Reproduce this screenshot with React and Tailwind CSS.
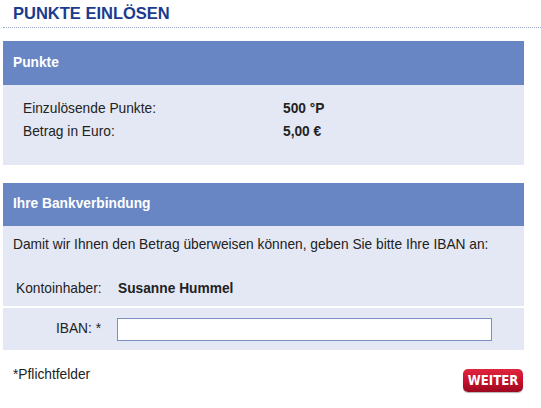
const Row = ({ label, value }) => (
  <div className="flex h-[23px] items-center">
    <div className="w-[260px]">{label}</div>
    <div className="font-bold">{value}</div>
  </div>
);

const App = () => {
  return (
    <div className="w-[541px] h-[408px] bg-white text-[13.75px] text-[#222] font-['Liberation_Sans',Arial,sans-serif]">
      {/* Title */}
      <div className="pl-[13px] pt-[1px] h-[28px] border-b border-dotted border-[#9aa6c4] ml-[3px]">
        <h1 className="-ml-[3px] text-[16.5px] font-bold text-[#1b3b8f] leading-[24px]">
          PUNKTE EINLÖSEN
        </h1>
      </div>

      {/* Punkte */}
      <div className="mt-[13px] ml-[3px] w-[521px]">
        <div className="h-[44px] bg-[#6786c3] flex items-center px-[10px] text-white font-bold">
          Punkte
        </div>
        <div className="h-[80px] bg-[#e4e8f4] pl-[20px] pt-[13px]">
          <Row label="Einzulösende Punkte:" value="500 °P" />
          <Row label="Betrag in Euro:" value="5,00 €" />
        </div>
      </div>

      {/* Bankverbindung */}
      <div className="mt-[18px] ml-[3px] w-[521px]">
        <div className="h-[43px] bg-[#6786c3] flex items-center px-[10px] text-white font-bold">
          Ihre Bankverbindung
        </div>
        <div className="bg-[#e4e8f4] h-[80px] px-[10px] pt-[8px]">
          <div className="h-[22px] flex items-center">
            Damit wir Ihnen den Betrag überweisen können, geben Sie bitte Ihre IBAN an:
          </div>
          <div className="flex items-center mt-[22px] h-[22px] pl-[3px]">
            <div className="w-[102px]">Kontoinhaber:</div>
            <div className="font-bold">Susanne Hummel</div>
          </div>
        </div>
        <div className="mt-[2px] bg-[#e4e8f4] h-[42px] flex items-center">
          <label className="w-[102px] text-right pr-[4px]">IBAN: *</label>
          <input
            type="text"
            className="ml-[12px] w-[375px] h-[23px] bg-white border border-[#7d8fc2] outline-none"
          />
        </div>
      </div>

      {/* Footer */}
      <div className="flex justify-between items-start pl-[13px] pr-[18px] mt-[15px]">
        <div>*Pflichtfelder</div>
        <button className="mt-[4px] h-[23px] w-[60px] flex items-center justify-center rounded-[5px] bg-gradient-to-b from-[#e0253f] via-[#c8102e] to-[#9c0a20] text-white font-bold text-[14.5px] leading-[23px] font-['DejaVu_Sans_Condensed','DejaVu_Sans',sans-serif] shadow-[0_1px_1px_rgba(0,0,0,0.3)]">
          <span className="inline-block scale-x-[0.9]">WEITER</span>
        </button>
      </div>
    </div>
  );
};

export default App;
